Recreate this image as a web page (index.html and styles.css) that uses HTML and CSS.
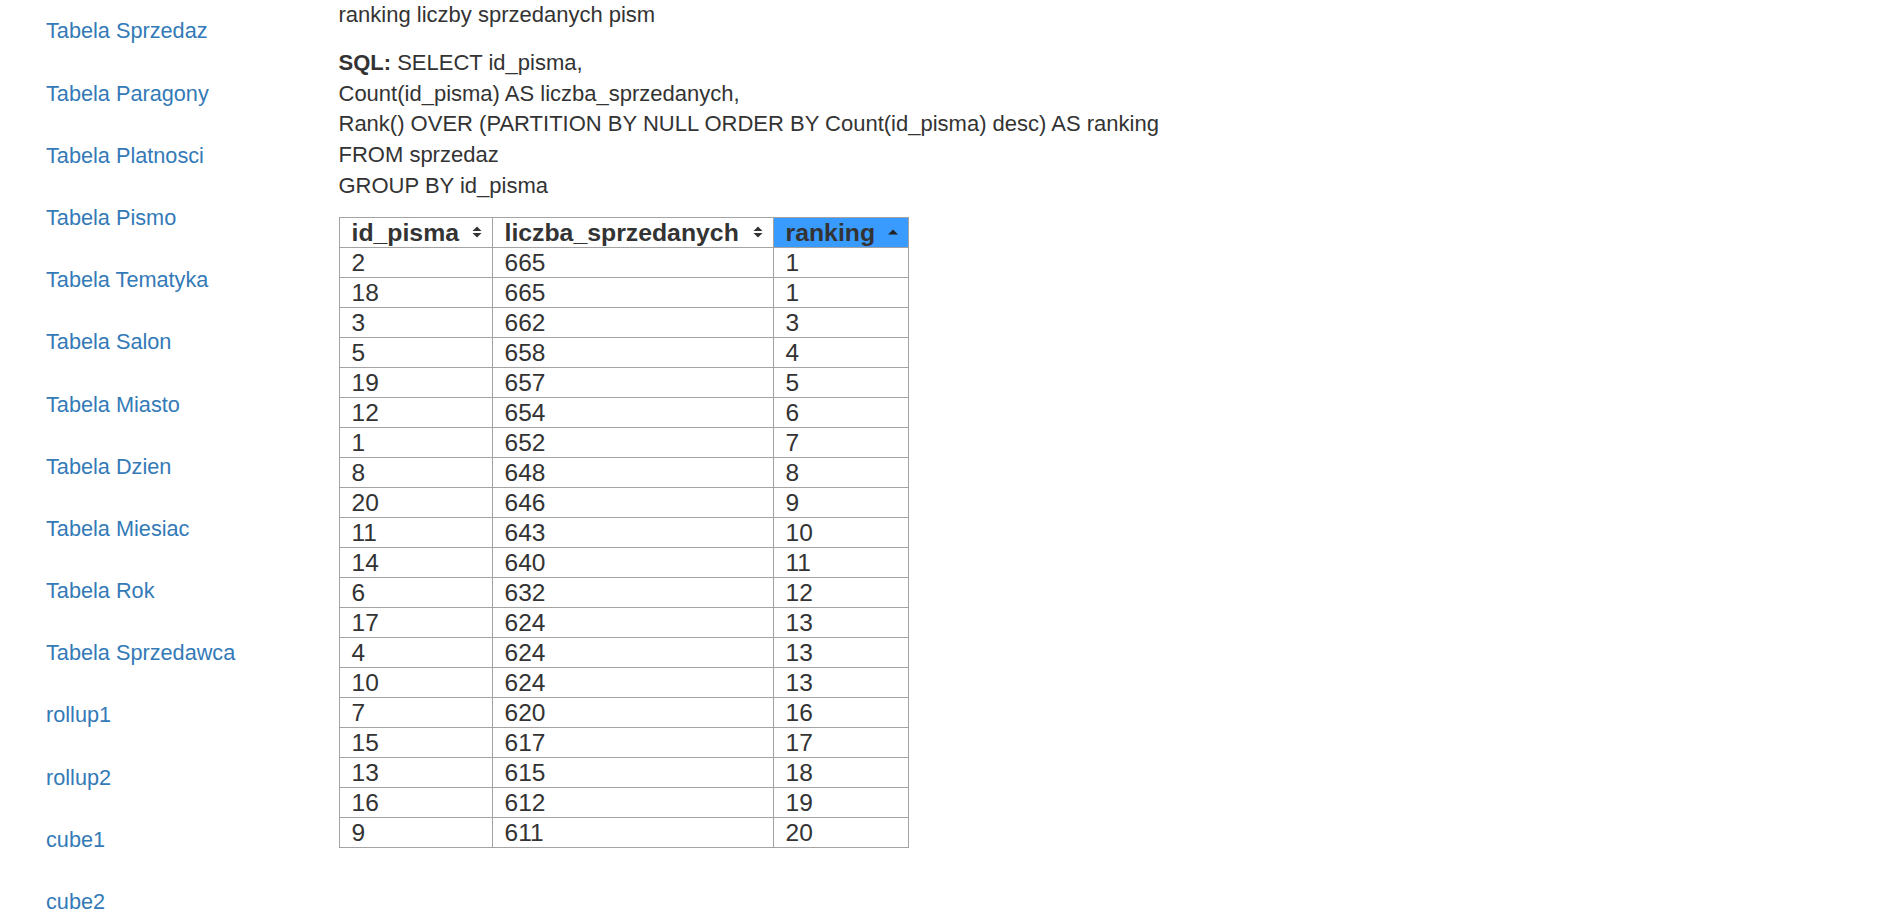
FILE: index.html
```html
<!DOCTYPE html>
<html lang="pl">
<head>
<meta charset="utf-8">
<title>ranking liczby sprzedanych pism</title>
<link rel="stylesheet" href="styles.css">
</head>
<body>
<div class="layout">
  <nav class="sidebar">
    <ul class="nav">
      <li><a href="#">Tabela Sprzedaz</a></li>
      <li><a href="#">Tabela Paragony</a></li>
      <li><a href="#">Tabela Platnosci</a></li>
      <li><a href="#">Tabela Pismo</a></li>
      <li><a href="#">Tabela Tematyka</a></li>
      <li><a href="#">Tabela Salon</a></li>
      <li><a href="#">Tabela Miasto</a></li>
      <li><a href="#">Tabela Dzien</a></li>
      <li><a href="#">Tabela Miesiac</a></li>
      <li><a href="#">Tabela Rok</a></li>
      <li><a href="#">Tabela Sprzedawca</a></li>
      <li><a href="#">rollup1</a></li>
      <li><a href="#">rollup2</a></li>
      <li><a href="#">cube1</a></li>
      <li><a href="#">cube2</a></li>
    </ul>
  </nav>
  <main class="content">
    <p class="title">ranking liczby sprzedanych pism</p>
    <p class="sql"><b>SQL:</b> SELECT id_pisma,<br>Count(id_pisma) AS liczba_sprzedanych,<br>Rank() OVER (PARTITION BY NULL ORDER BY Count(id_pisma) desc) AS ranking<br>FROM sprzedaz<br>GROUP BY id_pisma</p>
    <table class="data">
      <colgroup>
        <col class="c1"><col class="c2"><col class="c3">
      </colgroup>
      <thead>
        <tr>
          <th><div class="th-in"><span>id_pisma</span><svg class="sort" width="10" height="12" viewBox="0 0 10 12"><path d="M5 0.5 L9.5 5 L0.5 5 Z M0.5 7 L9.5 7 L5 11.5 Z" fill="#333"/></svg></div></th>
          <th><div class="th-in"><span>liczba_sprzedanych</span><svg class="sort" width="10" height="12" viewBox="0 0 10 12"><path d="M5 0.5 L9.5 5 L0.5 5 Z M0.5 7 L9.5 7 L5 11.5 Z" fill="#333"/></svg></div></th>
          <th class="active"><div class="th-in"><span>ranking</span><svg class="sort" width="10" height="12" viewBox="0 0 10 12"><path d="M5 3.5 L10 8.5 L0 8.5 Z" fill="#222"/></svg></div></th>
        </tr>
      </thead>
      <tbody>
        <tr><td>2</td><td>665</td><td>1</td></tr>
        <tr><td>18</td><td>665</td><td>1</td></tr>
        <tr><td>3</td><td>662</td><td>3</td></tr>
        <tr><td>5</td><td>658</td><td>4</td></tr>
        <tr><td>19</td><td>657</td><td>5</td></tr>
        <tr><td>12</td><td>654</td><td>6</td></tr>
        <tr><td>1</td><td>652</td><td>7</td></tr>
        <tr><td>8</td><td>648</td><td>8</td></tr>
        <tr><td>20</td><td>646</td><td>9</td></tr>
        <tr><td>11</td><td>643</td><td>10</td></tr>
        <tr><td>14</td><td>640</td><td>11</td></tr>
        <tr><td>6</td><td>632</td><td>12</td></tr>
        <tr><td>17</td><td>624</td><td>13</td></tr>
        <tr><td>4</td><td>624</td><td>13</td></tr>
        <tr><td>10</td><td>624</td><td>13</td></tr>
        <tr><td>7</td><td>620</td><td>16</td></tr>
        <tr><td>15</td><td>617</td><td>17</td></tr>
        <tr><td>13</td><td>615</td><td>18</td></tr>
        <tr><td>16</td><td>612</td><td>19</td></tr>
        <tr><td>9</td><td>611</td><td>20</td></tr>
      </tbody>
    </table>
  </main>
</div>
</body>
</html>
```

FILE: styles.css
```css
html, body {
  margin: 0;
  padding: 0;
  overflow: hidden;
  background: #fff;
}

body {
  font-family: "Liberation Sans", Arial, sans-serif;
  font-size: 22px;
  line-height: 30.8px;
  color: #333;
}

.layout {
  display: grid;
  grid-template-columns: 316px 1fr;
  height: 912px;
}

.sidebar {
  padding-left: 46px;
  font-size: 21.7px;
}

.nav {
  list-style: none;
  margin: 0;
  padding: 0;
  padding-top: 0.8px;
}

.nav a {
  display: block;
  padding: 15.7px 0;
  color: #337ab7;
  text-decoration: none;
}

.content {
  padding-left: 22.5px;
}

.content .title {
  margin: 0 0 17px 0;
}

.content .sql {
  margin: 0 0 15px 0;
}

.data {
  border-collapse: collapse;
  table-layout: fixed;
  width: 569px;
  font-size: 24.5px;
}

.data col.c1 { width: 153px; }
.data col.c2 { width: 281px; }
.data col.c3 { width: 135px; }

.data th,
.data td {
  border: 1px solid #a3a3a3;
  padding: 0 0 0 12px;
  line-height: 29px;
  height: 29px;
  text-align: left;
  white-space: nowrap;
}

.data th {
  font-weight: bold;
  font-size: 24.8px;
  padding-right: 10px;
}

.data th.active {
  background: #3a9bff;
}

.th-in {
  display: flex;
  align-items: center;
  justify-content: space-between;
}

.sort {
  flex: none;
  display: block;
}
```
